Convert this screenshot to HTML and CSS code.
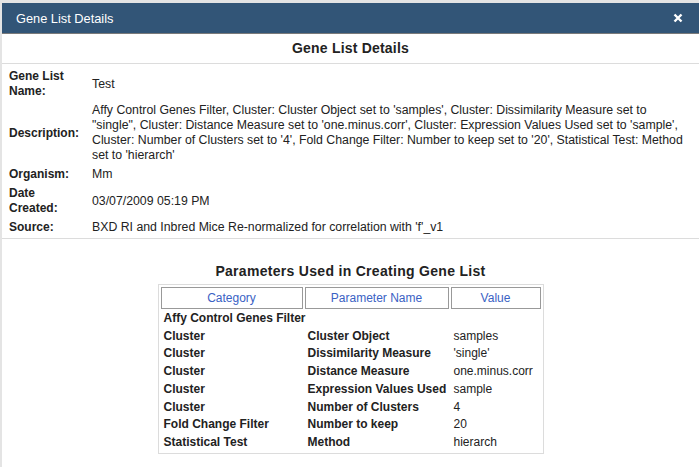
FILE: index.html
```html
<!DOCTYPE html>
<html>
<head>
<meta charset="utf-8">
<title>Gene List Details</title>
<link rel="stylesheet" href="styles.css">
</head>
<body>
<div class="dialog">
  <div class="titlebar">
    <span class="title">Gene List Details</span>
    <svg class="close" width="10" height="10" viewBox="0 0 10 10"><path d="M1.5 1.5 L8.5 8.5 M8.5 1.5 L1.5 8.5" stroke="#fff" stroke-width="2.4" fill="none"/></svg>
  </div>
  <div class="content">
    <h1 class="heading">Gene List Details</h1>
    <div class="details">
      <div class="label">Gene List Name:</div>
      <div class="value">Test</div>
      <div class="label">Description:</div>
      <div class="value">Affy Control Genes Filter, Cluster: Cluster Object set to 'samples', Cluster: Dissimilarity Measure set to<br>"single", Cluster: Distance Measure set to 'one.minus.corr', Cluster: Expression Values Used set to 'sample',<br>Cluster: Number of Clusters set to '4', Fold Change Filter: Number to keep set to '20', Statistical Test: Method<br>set to 'hierarch'</div>
      <div class="label">Organism:</div>
      <div class="value">Mm</div>
      <div class="label">Date Created:</div>
      <div class="value">03/07/2009 05:19 PM</div>
      <div class="label">Source:</div>
      <div class="value">BXD RI and Inbred Mice Re-normalized for correlation with 'f'_v1</div>
    </div>
    <div class="params">
      <h2 class="subheading">Parameters Used in Creating Gene List</h2>
      <table class="ptable">
        <thead>
          <tr><th class="c1">Category</th><th class="c2">Parameter Name</th><th class="c3">Value</th></tr>
        </thead>
        <tbody>
          <tr><td class="b">Affy Control Genes Filter</td><td class="b"></td><td></td></tr>
          <tr><td class="b">Cluster</td><td class="b">Cluster Object</td><td>samples</td></tr>
          <tr><td class="b">Cluster</td><td class="b">Dissimilarity Measure</td><td>'single'</td></tr>
          <tr><td class="b">Cluster</td><td class="b">Distance Measure</td><td>one.minus.corr</td></tr>
          <tr><td class="b">Cluster</td><td class="b">Expression Values Used</td><td>sample</td></tr>
          <tr><td class="b">Cluster</td><td class="b">Number of Clusters</td><td>4</td></tr>
          <tr><td class="b">Fold Change Filter</td><td class="b">Number to keep</td><td>20</td></tr>
          <tr><td class="b">Statistical Test</td><td class="b">Method</td><td>hierarch</td></tr>
        </tbody>
      </table>
    </div>
  </div>
</div>
</body>
</html>
```

FILE: styles.css
```css
html, body {
  margin: 0;
  padding: 0;
  background: #e4e4e4;
  font-family: "Liberation Sans", Arial, sans-serif;
  color: #222;
}
.dialog {
  width: 697px;
  height: 464px;
  margin: 3px 0 0 2px;
  background: #fff;
  display: flex;
  flex-direction: column;
  overflow: hidden;
}
.titlebar {
  height: 30px;
  background: #325577;
  border-bottom: 1px solid #7a7a7a;
  display: flex;
  align-items: center;
  justify-content: space-between;
  padding: 0 16px 0 14px;
  flex: none;
}
.title {
  color: #fff;
  font-size: 12.8px;
}
.close {
  display: block;
}
.content {
  flex: 1;
  display: flex;
  flex-direction: column;
}
.heading {
  margin: 0;
  height: 29px;
  line-height: 29px;
  font-size: 14px;
  font-weight: bold;
  text-align: center;
  letter-spacing: 0.2px;
  border-bottom: 1px solid #dcdcdc;
}
.details {
  display: grid;
  grid-template-columns: 90px 1fr;
  padding: 5px 4px 3px 0;
  font-size: 12px;
  line-height: 15px;
  row-gap: 4px;
  border-bottom: 1px solid #dcdcdc;
  white-space: nowrap;
}
.label {
  font-weight: bold;
  padding-left: 7px;
  padding-right: 14px;
  align-self: center;
  white-space: normal;
}
.value {
  align-self: center;
  font-size: 12.3px;
}
.params {
  display: flex;
  flex-direction: column;
  align-items: center;
  padding-top: 24px;
}
.subheading {
  margin: 0 0 5px 0;
  font-size: 14px;
  font-weight: bold;
  letter-spacing: 0.3px;
  line-height: 16px;
}
.ptable {
  border: 1px solid #dcdcdc;
  border-spacing: 2px;
  font-size: 12px;
  table-layout: fixed;
  width: 386px;
}
.ptable th {
  font-weight: normal;
  color: #3a62c4;
  border: 1px solid #999;
  height: 22px;
  padding: 0;
  line-height: 15px;
  box-sizing: border-box;
}
.ptable th.c1 { width: 142px; }
.ptable th.c2 { width: 144px; }
.ptable th.c3 { width: 90px; }
.ptable td {
  padding: 0 0 0 3px;
  line-height: 15.7px;
  white-space: nowrap;
  overflow: visible;
}
.ptable td.b {
  font-weight: bold;
}
```
